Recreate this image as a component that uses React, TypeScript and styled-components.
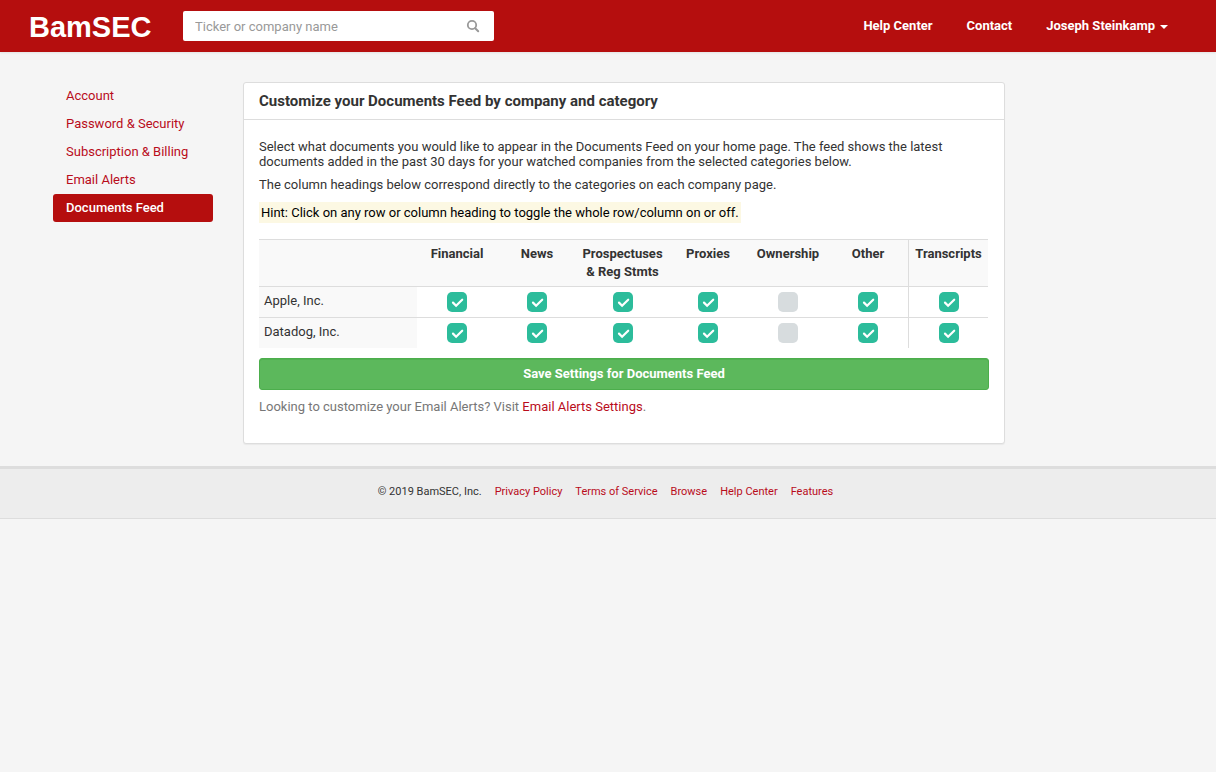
import React, { useState } from 'react';
import styled, { createGlobalStyle } from 'styled-components';

const red = '#b50e0e';
const linkRed = '#b90c1b';
const line = '#dddddd';

const GlobalStyle = createGlobalStyle`
  *, *::before, *::after { box-sizing: border-box; }
  body {
    margin: 0;
    background: #f5f5f5;
    color: #333333;
    font-family: Roboto, "Helvetica Neue", Arial, sans-serif;
    font-size: 13px;
    line-height: 15px;
  }
  button, input { font: inherit; color: inherit; }
`;

const TopBar = styled.header`
  display: flex;
  align-items: center;
  height: 52px;
  padding: 0 48px 0 29px;
  background: ${red};
  box-shadow: 0 1px 2px rgba(0, 0, 0, 0.08);
`;

const Logo = styled.a`
  width: 154px;
  flex: none;
  padding-top: 2px;
  color: #ffffff;
  font-family: "Liberation Sans", Arial, sans-serif;
  font-size: 29px;
  line-height: 50px;
  font-weight: 700;
  text-decoration: none;
`;

const SearchForm = styled.form`
  display: flex;
  align-items: center;
  flex: 0 1 311px;
  height: 30px;
  background: #ffffff;
  border-radius: 2px;
`;

const SearchInput = styled.input`
  flex: 1;
  min-width: 0;
  height: 30px;
  padding: 0 12px;
  border: 0;
  background: transparent;
  outline: none;
  &::placeholder { color: #999999; opacity: 1; }
`;

const SearchButton = styled.button`
  display: flex;
  padding: 0 14px;
  border: 0;
  background: transparent;
  color: #999999;
  cursor: pointer;
`;

const TopNav = styled.nav`
  display: flex;
  align-items: center;
  gap: 34px;
  margin-left: auto;
  padding-bottom: 2px;
  white-space: nowrap;
`;

const TopLink = styled.a`
  color: #ffffff;
  font-weight: 700;
  text-decoration: none;
`;

const UserMenu = styled.button`
  display: flex;
  align-items: center;
  gap: 5px;
  padding: 0;
  border: 0;
  background: transparent;
  color: #ffffff;
  font-weight: 700;
  cursor: pointer;
`;

const Caret = styled.span`
  margin-top: 3px;
  border-top: 4px solid currentColor;
  border-left: 4px solid transparent;
  border-right: 4px solid transparent;
`;

const Page = styled.div`
  display: grid;
  grid-template-columns: 160px minmax(0, 762px);
  column-gap: 30px;
  align-items: start;
  max-width: 1140px;
  margin: 0 auto;
  padding: 30px 15px 22px;
`;

const SideNav = styled.nav`
  display: flex;
  flex-direction: column;
`;

const SideLink = styled.a<{ $active?: boolean }>`
  padding: 0 13px;
  line-height: 28px;
  border-radius: 3px;
  text-decoration: none;
  font-weight: ${p => (p.$active ? 500 : 400)};
  color: ${p => (p.$active ? '#ffffff' : linkRed)};
  background: ${p => (p.$active ? red : 'transparent')};
`;

const Panel = styled.main`
  background: #ffffff;
  border: 1px solid ${line};
  border-radius: 3px;
  box-shadow: 0 1px 1px rgba(0, 0, 0, 0.05);
`;

const PanelTitle = styled.h1`
  margin: 0;
  padding: 9px 15px;
  border-bottom: 1px solid ${line};
  font-size: 15px;
  line-height: 18px;
  font-weight: 700;
`;

const PanelBody = styled.div`
  padding: 19px 15px 29px;
`;

const Text = styled.p`
  margin: 0 0 8px;
`;

const Hint = styled.p`
  width: fit-content;
  margin: 10px 0 16px;
  padding: 3px 2px;
  background: #fcf8e3;
  color: #000000;
`;

const FeedTable = styled.table`
  width: calc(100% - 1px);
  table-layout: fixed;
  border-collapse: separate;
  border-spacing: 0;
  line-height: 18px;
`;

const Col = styled.col<{ $width?: number }>`
  width: ${p => (p.$width ? `${p.$width}px` : 'auto')};
`;

const HeadCell = styled.th<{ $divided?: boolean }>`
  padding: 5px 0;
  border-top: 1px solid ${line};
  border-left: ${p => (p.$divided ? `1px solid ${line}` : '0')};
  background: #f9f9f9;
  vertical-align: top;
  font-weight: 700;
`;

const RowHead = styled.th`
  padding: 5px;
  border-top: 1px solid ${line};
  background: #f9f9f9;
  vertical-align: top;
  text-align: left;
  font-weight: 400;
`;

const Cell = styled.td<{ $divided?: boolean }>`
  padding: 5px 0;
  border-top: 1px solid ${line};
  border-left: ${p => (p.$divided ? `1px solid ${line}` : '0')};
`;

const HeadingButton = styled.button`
  display: block;
  width: 100%;
  padding: 0;
  border: 0;
  background: transparent;
  text-align: inherit;
  white-space: pre-line;
  cursor: pointer;
`;

const Tick = styled.span`
  display: grid;
  width: 20px;
  height: 20px;
  margin: 0 auto;
  > * { grid-area: 1 / 1; }
  > svg { pointer-events: none; }
`;

const TickInput = styled.input`
  appearance: none;
  width: 20px;
  height: 20px;
  margin: 0;
  border-radius: 5px;
  background: #d7dcde;
  cursor: pointer;
  &:checked { background: #2cbc9b; }
`;

const SaveButton = styled.button`
  display: block;
  width: 100%;
  height: 32px;
  margin: 10px 0 9px;
  padding: 0 0 2px;
  border: 1px solid #4cae4c;
  border-radius: 3px;
  background: #5cb85c;
  box-shadow: inset 0 1px 0 #52b152;
  color: #ffffff;
  font-weight: 700;
  cursor: pointer;
`;

const Note = styled.p`
  margin: 0;
  color: #777777;
`;

const Link = styled.a`
  color: ${linkRed};
  text-decoration: none;
`;

const Footer = styled.footer`
  display: flex;
  justify-content: center;
  gap: 13px;
  padding: 15px 5px 19px 0;
  border-top: 3px solid ${line};
  border-bottom: 1px solid ${line};
  background: #ededed;
  font-size: 11px;
`;

const columns = [
  { name: 'Financial', width: 80 },
  { name: 'News', width: 80 },
  { name: 'Prospectuses\n& Reg Stmts', width: 91 },
  { name: 'Proxies', width: 80 },
  { name: 'Ownership', width: 80 },
  { name: 'Other', width: 80 },
  { name: 'Transcripts', width: 80, divided: true },
];

const companies = ['Apple, Inc.', 'Datadog, Inc.'];
const sideLinks = ['Account', 'Password & Security', 'Subscription & Billing', 'Email Alerts', 'Documents Feed'];
const footerLinks = ['Privacy Policy', 'Terms of Service', 'Browse', 'Help Center', 'Features'];

export default function App() {
  const [grid, setGrid] = useState(() => companies.map(() => columns.map(c => c.name !== 'Ownership')));

  const toggleCell = (r: number, c: number) =>
    setGrid(g => g.map((row, i) => row.map((v, j) => (i === r && j === c ? !v : v))));
  const toggleRow = (r: number) =>
    setGrid(g => g.map((row, i) => (i === r ? row.map(() => !row.every(Boolean)) : row)));
  const toggleColumn = (c: number) =>
    setGrid(g => {
      const next = !g.every(row => row[c]);
      return g.map(row => row.map((v, j) => (j === c ? next : v)));
    });

  return (
    <>
      <GlobalStyle />
      <TopBar>
        <Logo href="#">BamSEC</Logo>
        <SearchForm role="search" onSubmit={e => e.preventDefault()}>
          <SearchInput type="text" aria-label="Ticker or company name" placeholder="Ticker or company name" />
          <SearchButton type="submit" aria-label="Search">
            <svg width="14" height="14" viewBox="0 0 14 14" fill="none" stroke="currentColor">
              <circle cx="6" cy="6" r="4.2" strokeWidth="1.8" />
              <path d="M9.2 9.2l3 3" strokeWidth="2" strokeLinecap="round" />
            </svg>
          </SearchButton>
        </SearchForm>
        <TopNav>
          <TopLink href="#">Help Center</TopLink>
          <TopLink href="#">Contact</TopLink>
          <UserMenu type="button">
            Joseph Steinkamp
            <Caret />
          </UserMenu>
        </TopNav>
      </TopBar>

      <Page>
        <SideNav>
          {sideLinks.map(label => (
            <SideLink key={label} href="#" $active={label === 'Documents Feed'}>
              {label}
            </SideLink>
          ))}
        </SideNav>

        <Panel>
          <PanelTitle>Customize your Documents Feed by company and category</PanelTitle>
          <PanelBody>
            <Text>
              Select what documents you would like to appear in the Documents Feed on your home page. The feed shows
              the latest documents added in the past 30 days for your watched companies from the selected categories
              below.
            </Text>
            <Text>The column headings below correspond directly to the categories on each company page.</Text>
            <Hint>Hint: Click on any row or column heading to toggle the whole row/column on or off.</Hint>

            <FeedTable>
              <colgroup>
                <Col />
                {columns.map(c => (
                  <Col key={c.name} $width={c.width} />
                ))}
              </colgroup>
              <thead>
                <tr>
                  <HeadCell as="td" />
                  {columns.map((c, j) => (
                    <HeadCell key={c.name} scope="col" $divided={c.divided}>
                      <HeadingButton type="button" onClick={() => toggleColumn(j)}>
                        {c.name}
                      </HeadingButton>
                    </HeadCell>
                  ))}
                </tr>
              </thead>
              <tbody>
                {companies.map((company, i) => (
                  <tr key={company}>
                    <RowHead scope="row">
                      <HeadingButton type="button" onClick={() => toggleRow(i)}>
                        {company}
                      </HeadingButton>
                    </RowHead>
                    {columns.map((c, j) => (
                      <Cell key={c.name} $divided={c.divided}>
                        <Tick>
                          <TickInput
                            type="checkbox"
                            aria-label={`${company} ${c.name}`}
                            checked={grid[i][j]}
                            onChange={() => toggleCell(i, j)}
                          />
                          {grid[i][j] && (
                            <svg width="20" height="20" viewBox="0 0 20 20" fill="none" aria-hidden="true">
                              <path
                                d="M6 10.6l3.1 3.1L15.2 7.7"
                                stroke="#ffffff"
                                strokeWidth="2.2"
                                strokeLinecap="round"
                              />
                            </svg>
                          )}
                        </Tick>
                      </Cell>
                    ))}
                  </tr>
                ))}
              </tbody>
            </FeedTable>

            <SaveButton type="button">Save Settings for Documents Feed</SaveButton>
            <Note>
              Looking to customize your Email Alerts? Visit <Link href="#">Email Alerts Settings</Link>.
            </Note>
          </PanelBody>
        </Panel>
      </Page>

      <Footer>
        <span>© 2019 BamSEC, Inc.</span>
        {footerLinks.map(label => (
          <Link key={label} href="#">
            {label}
          </Link>
        ))}
      </Footer>
    </>
  );
}
